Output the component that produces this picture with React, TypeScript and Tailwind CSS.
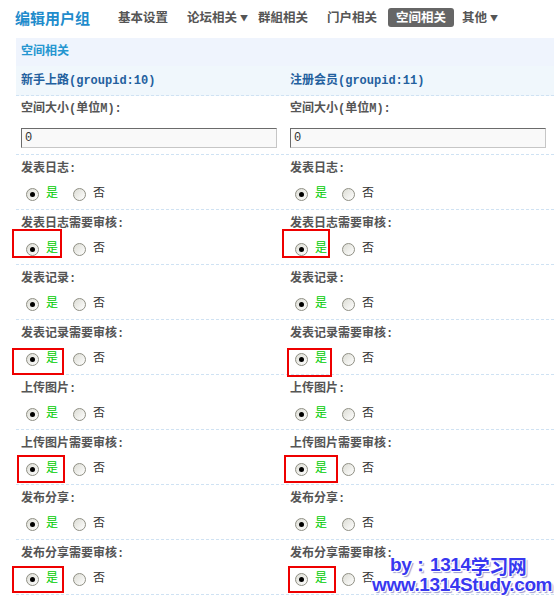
// 编辑用户组 - 空间相关

import React from 'react';

type Mark = { l: string; r: string };

const NAV = [
  { label: '基本设置', cls: 'ml-[28px]' },
  { label: '论坛相关', cls: 'ml-[19px]', arrow: true },
  { label: '群組相关', cls: 'ml-[10px]' },
  { label: '门户相关', cls: 'ml-[19px]' },
  { label: '空间相关', cls: 'ml-[11px]', active: true },
  { label: '其他', cls: 'ml-[8px]', arrow: true },
];

// 红框的位置（相对于单元格）
const ROWS: { label: string; mark?: Mark }[] = [
  { label: '发表日志:' },
  { label: '发表日志需要审核:', mark: { l: 'left-[-4px] top-[19px] w-[50px] h-[29px]', r: 'left-[-3px] top-[19px] w-[48px] h-[29px]' } },
  { label: '发表记录:' },
  { label: '发表记录需要审核:', mark: { l: 'left-[-4px] top-[28px] w-[52px] h-[27px]', r: 'left-[2px] top-[28px] w-[45px] h-[29px]' } },
  { label: '上传图片:' },
  { label: '上传图片需要审核:', mark: { l: 'left-[1px] top-[25px] w-[48px] h-[28px]', r: 'left-[-1px] top-[25px] w-[54px] h-[28px]' } },
  { label: '发布分享:' },
  { label: '发布分享需要审核:', mark: { l: 'left-[-4px] top-[26px] w-[52px] h-[27px]', r: 'left-[3px] top-[26px] w-[48px] h-[27px]' } },
];

const Radio: React.FC<{ checked?: boolean }> = ({ checked }) => (
  <span className="w-[13px] h-[13px] rounded-full border border-[#8f8f84] bg-gradient-to-br from-[#dcdcd4] to-white flex items-center justify-center">
    {checked && <span className="w-[5px] h-[5px] rounded-full bg-black" />}
  </span>
);

const RadioCell: React.FC<{ label: string; mark?: string }> = ({ label, mark }) => (
  <div className="relative pl-[5px] pt-[7px] pb-[7px]">
    <div className="h-[14px] leading-[14px] font-bold text-[#555]">{label}</div>
    <div className="mt-[10px] h-[16px] flex items-center pl-[5px]">
      <Radio checked />
      <span className="ml-[7px] text-[#00cc00]">是</span>
      <span className="ml-[15px]"><Radio /></span>
      <span className="ml-[7px] text-[#333]">否</span>
    </div>
    {mark && <div className={`absolute border-2 border-[#ee0000] ${mark}`} />}
  </div>
);

const SizeCell: React.FC = () => (
  <div className="pl-[5px] pt-[6px] pb-[6px]">
    <div className="h-[14px] leading-[14px] font-bold text-[#555]">空间大小(单位M):</div>
    <div className="mt-[12px] w-[256px] h-[20px] border border-t-[#6b6b6b] border-l-[#6b6b6b] border-r-[#c6c6c6] border-b-[#c6c6c6] bg-[#f9f9f9] pl-[3px] leading-[18px] text-[#333]">
      0
    </div>
  </div>
);

export default function App() {
  return (
    <div className="relative w-[554px] h-[596px] overflow-hidden bg-white text-[12px] font-['Liberation_Mono','Noto_Sans_CJK_SC',monospace]">
      {/* 顶部导航 */}
      <div className="h-[38px] flex items-center pl-[15px] pb-[3px] font-['Noto_Sans_CJK_SC',sans-serif]">
        <h1 className="text-[15px] font-bold text-[#1f8ccc] leading-none">编辑用户组</h1>
        {NAV.map((n) => (
          <div
            key={n.label}
            className={`${n.cls} flex items-center font-bold text-[12.5px] leading-none ${
              n.active ? 'bg-[#666] text-white rounded-[3px] px-[8px] h-[19px]' : 'text-[#555]'
            }`}
          >
            {n.label}
            {n.arrow && <span className="ml-[3px] text-[8px]">▼</span>}
          </div>
        ))}
      </div>

      {/* 主面板 */}
      <div className="ml-[16px]">
        <div className="h-[28px] bg-[#eff4fd] pl-[5px] flex items-center font-bold text-[#2596d0]">空间相关</div>
        <div className="h-[30px] bg-[#f0f7fc] grid grid-cols-2 border-b border-dashed border-[#cfe2f3] font-bold text-[#23609e]">
          <div className="pl-[5px] flex items-center">新手上路(groupid:10)</div>
          <div className="pl-[5px] flex items-center">注册会员(groupid:11)</div>
        </div>

        <div className="grid grid-cols-2 border-b border-dashed border-[#cfe2f3]">
          <SizeCell />
          <SizeCell />
        </div>

        {ROWS.map((r) => (
          <div key={r.label} className="grid grid-cols-2 border-b border-dashed border-[#cfe2f3]">
            <RadioCell label={r.label} mark={r.mark?.l} />
            <RadioCell label={r.label} mark={r.mark?.r} />
          </div>
        ))}
      </div>

      {/* 水印 */}
      <div className="absolute left-[372px] top-[555px] font-['Liberation_Sans',sans-serif] font-bold text-[#3838f0] text-[19px] tracking-[-0.4px] [text-shadow:1px_1px_0_#fff,-1px_-1px_0_#fff,1px_-1px_0_#fff,-1px_1px_0_#fff,2px_2px_1px_#9a9ad0]">
        <div className="h-[20px] leading-[20px] pl-[18px] flex items-center">
          by：1314<span className="leading-none font-['Noto_Sans_CJK_SC',sans-serif]">学习网</span>
        </div>
        <div className="h-[20px] leading-[20px]">www.1314Study.com</div>
      </div>
    </div>
  );
}
